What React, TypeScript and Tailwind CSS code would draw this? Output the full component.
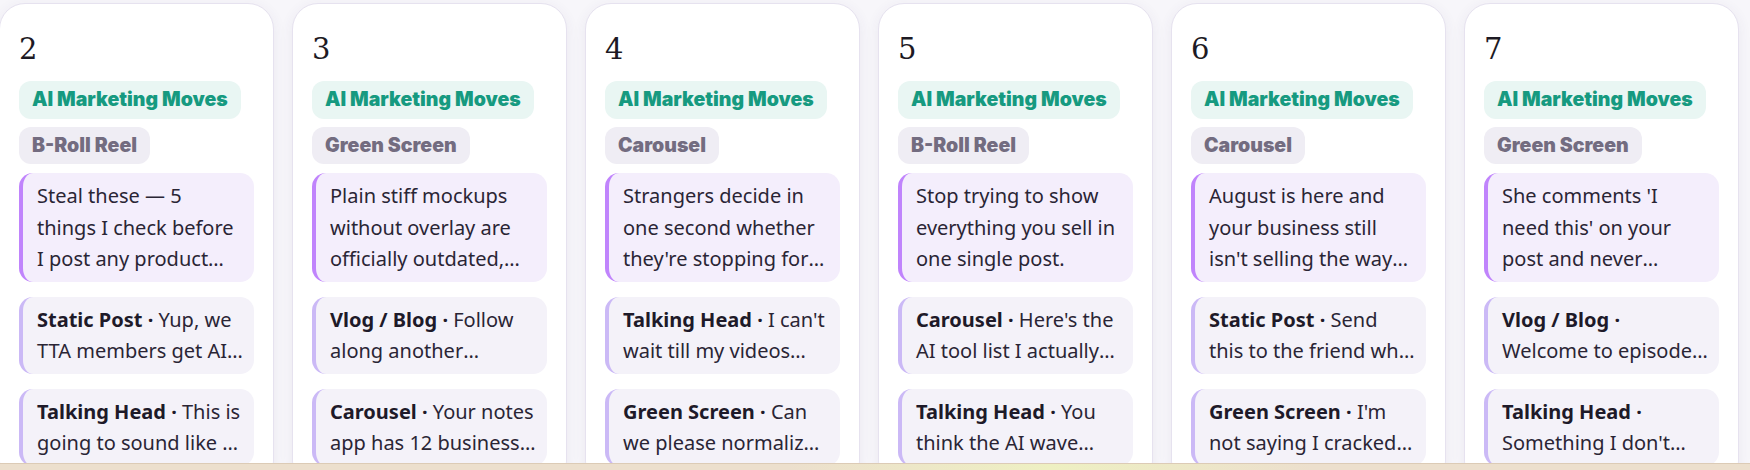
import React from 'react';

type Idea = { format: string; text: string };
type Day = { day: number; format: string; hook: string; ideas: Idea[] };

const days: Day[] = [
  {
    day: 2,
    format: 'B-Roll Reel',
    hook: 'Steal these — 5 things I check before I post any product photo on my feed this week',
    ideas: [
      { format: 'Static Post', text: 'Yup, we TTA members get AI tools first and early' },
      { format: 'Talking Head', text: 'This is going to sound like a hot take but hear me out' },
    ],
  },
  {
    day: 3,
    format: 'Green Screen',
    hook: 'Plain stiff mockups without overlay are officially outdated, here is what works now',
    ideas: [
      { format: 'Vlog / Blog', text: 'Follow along another unforgettable day in my business' },
      { format: 'Carousel', text: 'Your notes app has 12 business ideas you never used' },
    ],
  },
  {
    day: 4,
    format: 'Carousel',
    hook: "Strangers decide in one second whether they're stopping for your post or scrolling past",
    ideas: [
      { format: 'Talking Head', text: "I can't wait till my videos start doing the work for me" },
      { format: 'Green Screen', text: 'Can we please normalize using AI for your captions' },
    ],
  },
  {
    day: 5,
    format: 'B-Roll Reel',
    hook: 'Stop trying to show everything you sell in one single post.',
    ideas: [
      { format: 'Carousel', text: "Here's the AI tool list I actually use every single week" },
      { format: 'Talking Head', text: 'You think the AI wave already passed you by' },
    ],
  },
  {
    day: 6,
    format: 'Carousel',
    hook: "August is here and your business still isn't selling the way you planned in January",
    ideas: [
      { format: 'Static Post', text: 'Send this to the friend who still writes every caption by hand' },
      { format: 'Green Screen', text: "I'm not saying I cracked the algorithm but look at this" },
    ],
  },
  {
    day: 7,
    format: 'Green Screen',
    hook: "She comments 'I need this' on your post and never comes back to actually buy",
    ideas: [
      { format: 'Vlog / Blog', text: 'Welcome to episode seven of building in public' },
      { format: 'Talking Head', text: "Something I don't talk about enough on here" },
    ],
  },
];

const sans = "font-['Noto_Sans',_'Open_Sans',_sans-serif]";
const heavy = "font-['Inter',_'Noto_Sans',_sans-serif]";

function DayCard({ day }: { day: Day }) {
  return (
    <div className="w-[275px] shrink-0 rounded-[26px] border border-[#e6e2ef] bg-white px-[19px] pt-[27px] pb-[20px] shadow-[0_3px_14px_rgba(70,50,120,0.07)]">
      <div className="font-['DejaVu_Serif',_serif] text-[29px] leading-[36px] text-[#1d1a24]">
        {day.day}
      </div>
      <div className={`mt-[14px] flex flex-col items-start gap-[8px] ${heavy}`}>
        <span className="inline-flex h-[38px] items-center rounded-[12px] bg-[#e9f6f3] px-[13px] text-[19.5px] font-black text-[#169a80]">
          AI Marketing Moves
        </span>
        <span className="inline-flex h-[37px] items-center rounded-[12px] bg-[#efedf4] px-[13px] text-[19.5px] font-black text-[#736c80]">
          {day.format}
        </span>
      </div>
      <div className={`mt-[9px] flex flex-col gap-[15px] ${sans} text-[20px] leading-[31.5px] text-[#2a2535]`}>
        <p className="line-clamp-3 rounded-[14px] border-l-[4px] border-[#c084fc] bg-[#f4eefc] py-[7px] pl-[14px] pr-[11px]">
          {day.hook}
        </p>
        {day.ideas.map((idea) => (
          <p
            key={idea.format}
            className="line-clamp-2 rounded-[14px] border-l-[4px] border-[#cbb9f6] bg-[#f4f2f9] py-[7px] pl-[14px] pr-[11px]"
          >
            <span className="font-bold text-[#1e1a29]">{idea.format} · </span>
            {idea.text}
          </p>
        ))}
      </div>
    </div>
  );
}

export default function App() {
  return (
    <div className="flex h-[470px] w-[1750px] flex-col overflow-hidden bg-[#f7f6fa]">
      <div className="min-h-0 flex-1 overflow-hidden pt-[3px]">
        <div className="-ml-px flex gap-[18px]">
          {days.map((d) => (
            <DayCard key={d.day} day={d} />
          ))}
        </div>
      </div>
      <div className="h-[7px] shrink-0 border-t border-[#dccbb6] bg-[linear-gradient(90deg,#ecdfcd_0%,#ecdfcd_45%,#eef0c2_60%,#ecdfcd_75%,#ecdfcd_100%)]" />
    </div>
  );
}
